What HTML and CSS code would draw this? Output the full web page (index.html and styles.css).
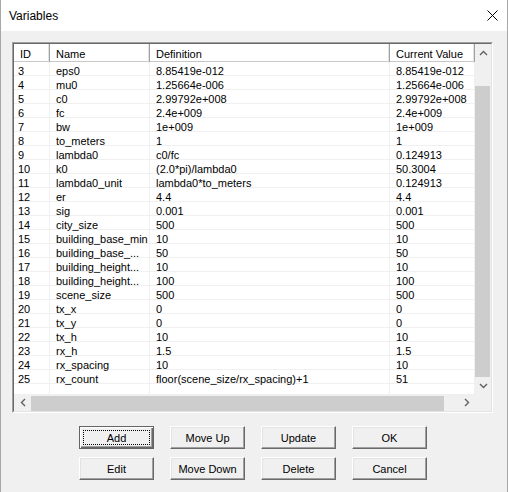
FILE: index.html
```html
<!DOCTYPE html>
<html lang="en">
<head>
    <meta charset="UTF-8">
    <title>Variables</title>
    <link rel="stylesheet" href="styles.css">
</head>
<body>
    <div class="window">
        <div class="titlebar">
            <span class="title">Variables</span>
            <svg class="close" width="11" height="11" viewBox="0 0 11 11">
                <path d="M0.5 0.5 L10.5 10.5 M10.5 0.5 L0.5 10.5" stroke="#000" stroke-width="1" fill="none"/>
            </svg>
        </div>

        <div class="content">
            <div class="list">
                <div class="list-inner">
                    <div class="view">
                        <div class="row head">
                            <div class="cell">ID</div>
                            <div class="cell">Name</div>
                            <div class="cell">Definition</div>
                            <div class="cell">Current Value</div>
                        </div>
                        <div class="row"><div class="cell">3</div><div class="cell">eps0</div><div class="cell">8.85419e-012</div><div class="cell">8.85419e-012</div></div>
                        <div class="row"><div class="cell">4</div><div class="cell">mu0</div><div class="cell">1.25664e-006</div><div class="cell">1.25664e-006</div></div>
                        <div class="row"><div class="cell">5</div><div class="cell">c0</div><div class="cell">2.99792e+008</div><div class="cell">2.99792e+008</div></div>
                        <div class="row"><div class="cell">6</div><div class="cell">fc</div><div class="cell">2.4e+009</div><div class="cell">2.4e+009</div></div>
                        <div class="row"><div class="cell">7</div><div class="cell">bw</div><div class="cell">1e+009</div><div class="cell">1e+009</div></div>
                        <div class="row"><div class="cell">8</div><div class="cell">to_meters</div><div class="cell">1</div><div class="cell">1</div></div>
                        <div class="row"><div class="cell">9</div><div class="cell">lambda0</div><div class="cell">c0/fc</div><div class="cell">0.124913</div></div>
                        <div class="row"><div class="cell">10</div><div class="cell">k0</div><div class="cell">(2.0*pi)/lambda0</div><div class="cell">50.3004</div></div>
                        <div class="row"><div class="cell">11</div><div class="cell">lambda0_unit</div><div class="cell">lambda0*to_meters</div><div class="cell">0.124913</div></div>
                        <div class="row"><div class="cell">12</div><div class="cell">er</div><div class="cell">4.4</div><div class="cell">4.4</div></div>
                        <div class="row"><div class="cell">13</div><div class="cell">sig</div><div class="cell">0.001</div><div class="cell">0.001</div></div>
                        <div class="row"><div class="cell">14</div><div class="cell">city_size</div><div class="cell">500</div><div class="cell">500</div></div>
                        <div class="row"><div class="cell">15</div><div class="cell">building_base_min</div><div class="cell">10</div><div class="cell">10</div></div>
                        <div class="row"><div class="cell">16</div><div class="cell">building_base_...</div><div class="cell">50</div><div class="cell">50</div></div>
                        <div class="row"><div class="cell">17</div><div class="cell">building_height...</div><div class="cell">10</div><div class="cell">10</div></div>
                        <div class="row"><div class="cell">18</div><div class="cell">building_height...</div><div class="cell">100</div><div class="cell">100</div></div>
                        <div class="row"><div class="cell">19</div><div class="cell">scene_size</div><div class="cell">500</div><div class="cell">500</div></div>
                        <div class="row"><div class="cell">20</div><div class="cell">tx_x</div><div class="cell">0</div><div class="cell">0</div></div>
                        <div class="row"><div class="cell">21</div><div class="cell">tx_y</div><div class="cell">0</div><div class="cell">0</div></div>
                        <div class="row"><div class="cell">22</div><div class="cell">tx_h</div><div class="cell">10</div><div class="cell">10</div></div>
                        <div class="row"><div class="cell">23</div><div class="cell">rx_h</div><div class="cell">1.5</div><div class="cell">1.5</div></div>
                        <div class="row"><div class="cell">24</div><div class="cell">rx_spacing</div><div class="cell">10</div><div class="cell">10</div></div>
                        <div class="row"><div class="cell">25</div><div class="cell">rx_count</div><div class="cell">floor(scene_size/rx_spacing)+1</div><div class="cell">51</div></div>
                        <div class="row filler"><div class="cell"></div><div class="cell"></div><div class="cell"></div><div class="cell"></div></div>
                    </div>

                    <div class="vscroll">
                        <div class="arrow">
                            <svg width="9" height="6" viewBox="0 0 9 6"><path d="M1 5 L4.5 1.5 L8 5" stroke="#606060" stroke-width="1.4" fill="none"/></svg>
                        </div>
                        <div class="track"></div>
                        <div class="thumb"></div>
                        <div class="arrow">
                            <svg width="9" height="6" viewBox="0 0 9 6"><path d="M1 1 L4.5 4.5 L8 1" stroke="#606060" stroke-width="1.4" fill="none"/></svg>
                        </div>
                    </div>

                    <div class="hscroll">
                        <div class="arrow">
                            <svg width="6" height="9" viewBox="0 0 6 9"><path d="M5 1 L1.5 4.5 L5 8" stroke="#606060" stroke-width="1.4" fill="none"/></svg>
                        </div>
                        <div class="thumb"></div>
                        <div class="track"></div>
                        <div class="arrow">
                            <svg width="6" height="9" viewBox="0 0 6 9"><path d="M1 1 L4.5 4.5 L1 8" stroke="#606060" stroke-width="1.4" fill="none"/></svg>
                        </div>
                    </div>

                    <div class="corner"></div>
                </div>
            </div>

            <div class="buttons">
                <button class="btn default">Add</button>
                <button class="btn">Move Up</button>
                <button class="btn">Update</button>
                <button class="btn">OK</button>
                <button class="btn">Edit</button>
                <button class="btn">Move Down</button>
                <button class="btn">Delete</button>
                <button class="btn">Cancel</button>
            </div>
        </div>
    </div>
</body>
</html>
```

FILE: styles.css
```css
* {
    margin: 0;
    padding: 0;
    box-sizing: border-box;
}

body {
    width: 508px;
    height: 492px;
    overflow: hidden;
    background: #f0f0f0;
    font-family: "Liberation Sans", Arial, sans-serif;
    font-size: 11px;
    color: #000;
}

.window {
    width: 508px;
    height: 492px;
    background: #f0f0f0;
    border-left: 1px solid #a8a8a8;
    border-right: 1px solid #a8a8a8;
    display: flex;
    flex-direction: column;
}

/* title bar */
.titlebar {
    height: 31px;
    background: #fff;
    display: flex;
    align-items: center;
    justify-content: space-between;
    padding: 0 9px 0 8px;
}

.title {
    font-size: 12px;
}

.close {
    display: block;
}

.content {
    padding: 11px 0 0 11px;
}

/* list view */
.list {
    width: 481px;
    height: 371px;
    border: 1px solid;
    border-color: #a0a0a0 #fff #fff #a0a0a0;
}

.list-inner {
    height: 100%;
    border: 1px solid;
    border-color: #696969 #e3e3e3 #e3e3e3 #696969;
    background: #fff;
    display: grid;
    grid-template-columns: 461px 16px;
    grid-template-rows: 350px 17px;
}

.view {
    overflow: hidden;
}

.row {
    display: grid;
    grid-template-columns: 36px 100px 240px 85px;
    height: 14px;
    border-bottom: 1px solid #f0f0f0;
}

.cell {
    padding: 2px 0 0 6px;
    border-right: 1px solid #f0f0f0;
    white-space: nowrap;
    line-height: 14px;
}

.cell:first-child {
    padding-left: 4px;
}

.row.head {
    height: 18px;
    border-bottom: 1px solid #c8c8c8;
}

.row.head .cell {
    padding-top: 2px;
    line-height: 17px;
    border-right: 1px solid #a0a0a0;
    box-shadow: inset -1px 0 #e3e3e3;
}

.row.head .cell:first-child {
    padding-left: 6px;
}

.row.filler {
    height: 10px;
    border-bottom: none;
}

/* scrollbars */
.vscroll {
    background: #f0f0f0;
    display: flex;
    flex-direction: column;
}

.vscroll .arrow {
    height: 17px;
    display: flex;
    align-items: center;
    justify-content: center;
}

.vscroll .track {
    height: 25px;
}

.vscroll .thumb {
    flex: 1;
    background: #cdcdcd;
    margin: 0 1px 0 0;
}

.hscroll {
    background: #f0f0f0;
    display: flex;
}

.hscroll .arrow {
    width: 17px;
    display: flex;
    align-items: center;
    justify-content: center;
}

.hscroll .thumb {
    width: 413px;
    background: #cdcdcd;
    margin: 2px 0 0;
}

.hscroll .track {
    flex: 1;
}

.corner {
    background: #f0f0f0;
}

/* buttons */
.buttons {
    display: grid;
    grid-template-columns: repeat(4, 75px);
    grid-auto-rows: 23px;
    column-gap: 16px;
    row-gap: 8px;
    margin: 13px 0 0 67px;
}

.btn {
    font-family: "Liberation Sans", Arial, sans-serif;
    font-size: 11px;
    color: #000;
    background: #f0f0f0;
    border: 1px solid;
    border-color: #fff #696969 #696969 #fff;
    box-shadow: inset -1px -1px #a0a0a0, inset 1px 1px #e3e3e3;
}

.btn.default {
    border: 1px solid #646464;
    box-shadow: inset 1px 1px #fff, inset -1px -1px #696969, inset -2px -2px #a0a0a0;
    outline: 1px dotted #000;
    outline-offset: -5px;
}
```
